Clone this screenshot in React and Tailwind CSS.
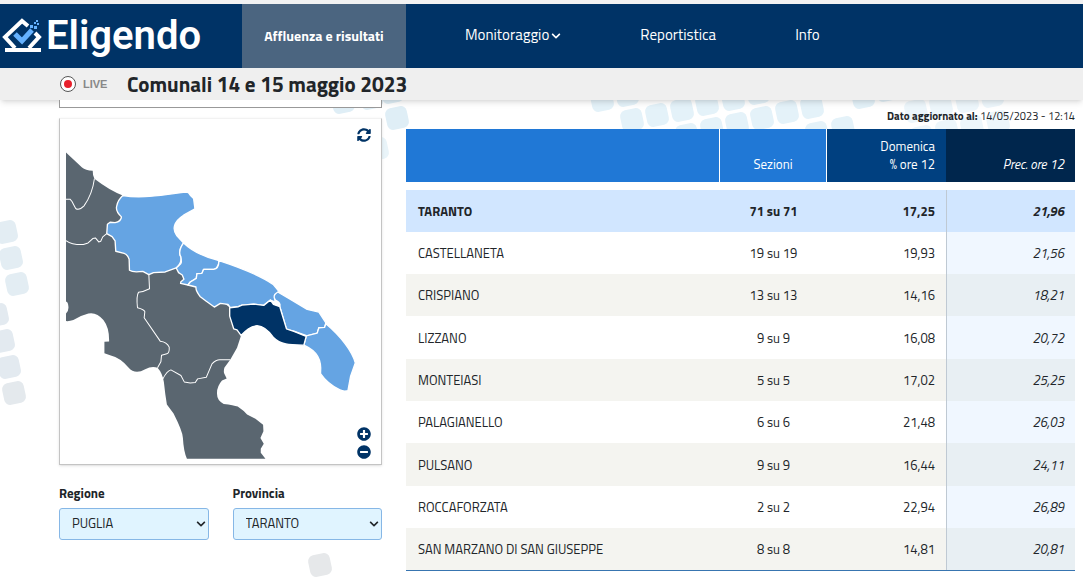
import React, { useState } from 'react';
import { FaSyncAlt, FaPlusCircle, FaMinusCircle, FaChevronDown } from 'react-icons/fa';

const rows = [
  { comune: 'TARANTO', sezioni: '71 su 71', ore12: '17,25', prec: '21,96', total: true },
  { comune: 'CASTELLANETA', sezioni: '19 su 19', ore12: '19,93', prec: '21,56' },
  { comune: 'CRISPIANO', sezioni: '13 su 13', ore12: '14,16', prec: '18,21' },
  { comune: 'LIZZANO', sezioni: '9 su 9', ore12: '16,08', prec: '20,72' },
  { comune: 'MONTEIASI', sezioni: '5 su 5', ore12: '17,02', prec: '25,25' },
  { comune: 'PALAGIANELLO', sezioni: '6 su 6', ore12: '21,48', prec: '26,03' },
  { comune: 'PULSANO', sezioni: '9 su 9', ore12: '16,44', prec: '24,11' },
  { comune: 'ROCCAFORZATA', sezioni: '2 su 2', ore12: '22,94', prec: '26,89' },
  { comune: 'SAN MARZANO DI SAN GIUSEPPE', sezioni: '8 su 8', ore12: '14,81', prec: '20,81' },
];

// centre x, centre y, fill
const tiles = [
  [6, 232, '#e3edf3'], [11, 258, '#e3edf3'], [17, 284, '#e3edf3'],
  [-3, 315, '#e3eaf0'], [3, 341, '#e3eaf0'], [9, 367, '#e3eaf0'], [14, 393, '#e4e9ed'],
  [320, 565, '#e6e8ea'],
  [343, 102, '#dfeef6'], [371, 98, '#dfeef6'], [392, 92, '#dfeef6'], [397, 118, '#dfeef6'], [377, 149, '#e9f4f9'],
  [602, 100, '#e4f2f9'], [627, 95, '#e4f2f9'],
  [632, 120, '#e4f2f9'], [657, 115, '#e4f2f9'], [682, 110, '#e4f2f9'], [707, 104, '#e4f2f9'], [733, 99, '#e4f2f9'], [758, 93, '#e4f2f9'],
  [687, 135, '#e4f2f9'], [712, 129, '#e4f2f9'], [737, 124, '#e4f2f9'], [762, 118, '#e4f2f9'], [787, 112, '#e4f2f9'], [812, 107, '#e4f2f9'],
  [863, 97, '#e4f2f9'], [887, 90, '#e4f2f9'], [817, 133, '#e4f2f9'], [843, 128, '#e4f2f9'],
  [916, 111, '#edf6fb'], [941, 106, '#edf6fb'], [967, 101, '#edf6fb'], [992, 96, '#edf6fb'],
  [922, 137, '#edf6fb'], [947, 131, '#edf6fb'], [972, 127, '#edf6fb'], [998, 122, '#edf6fb'],
];

const Tiles = () => (
  <svg className="pointer-events-none absolute left-0 top-0 -z-10" width="1083" height="581" aria-hidden="true">
    {tiles.map(([x, y, fill]) => (
      <rect key={`${x}-${y}`} x={x - 11} y={y - 11} width="22" height="22" rx="6" fill={fill} transform={`rotate(-12 ${x} ${y})`} />
    ))}
  </svg>
);

const Logo = () => (
  <svg viewBox="0 0 40 36" className="h-9 w-10 shrink-0" aria-hidden="true">
    <path d="M26 8 L20 3 L3 19 L13 30 M27 30 L37 19 L33 15" fill="none" stroke="#fff" strokeWidth="4" />
    <path d="M3 32 H39" stroke="#fff" strokeWidth="4" />
    <path d="M13 16 L20 23 L30 12" fill="none" stroke="#65b2ff" strokeWidth="5" />
    <path d="M28 7h3v3h-3z M32 4h2v2h-2z M32 8h3v3h-3z M35 5h2v2h-2z M34 2h2v2h-2z" fill="#65b2ff" />
  </svg>
);

const PugliaMap = () => (
  <svg viewBox="48 90 925 1002" className="block w-full" role="img" aria-label="Mappa della Puglia">
    <path
      fill="#5a6670"
      d="M48 175 L96 220 Q106 229 128 230 L129 243 L133 254 Q180 290 218 304 L300 400 L400 540 L540 640 L572 723 L560 760 L540 795 L522 820 Q519 832 522 838 L529 852 L515 858 Q500 875 500 895 Q499 918 520 928 Q550 931 562 936 Q580 948 590 960 L615 972 L638 990 L639 1010 L630 1030 L640 1047 L631 1062 L631 1074 L645 1092 L410 1092 Q400 1070 398 1030 Q397 1010 370 957 L350 930 Q345 900 341 862 Q336 835 322 820 Q306 813 285 824 Q255 842 235 819 Q212 790 180 782 L163 776 L163 742 L177 741 Q178 700 160 677 Q140 652 115 657 Q90 663 70 677 Q58 681 48 680 L48 657 Q57 650 55 635 Q54 622 48 621 Z"
    />
    <g fill="none" stroke="#fff" strokeWidth="3" strokeLinejoin="round">
      <path d="M133 254 Q127 300 102 335 Q87 350 77 343 Q70 330 66 322 L60 315 H48" />
      <path d="M48 439 Q65 452 100 451 L114 446 Q122 439 128 433 L136 431 L146 443 L152 441 L158 428 L170 418" />
      <path d="M296 541 L298 583 Q280 592 265 594 Q258 605 262 640 Q282 645 284 652 L282 670 L330 740 Q350 742 357 758 Q358 776 350 778 L334 782 L332 802 L322 820" />
      <path d="M338 853 Q350 829 362 826 L392 843 L402 862 L420 865 L435 864 L442 853 L468 848 Q480 820 485 808 Q498 795 510 796 H540" />
    </g>
    <g fill="#65a4e3" stroke="#fff" strokeWidth="4" strokeLinejoin="round">
      <path d="M218 304 C280 315 340 300 410 294 Q415 294 420 303 L430 313 L434 344 L400 363 C370 382 365 405 380 425 L400 446 C390 460 384 475 392 488 Q395 507 378 521 L345 533 L310 535 L296 541 L278 531 Q248 535 238 528 L237 495 Q232 480 222 477 L197 471 L195 440 L186 427 L170 418 L172 390 L180 384 L195 385 Q213 382 214 368 Q195 350 200 335 Q203 318 218 304 Z" />
      <path d="M400 446 C430 475 470 490 506 499 Q505 524 490 525 L460 525 L455 537 L440 538 L438 552 L420 563 L413 572 L391 567 L392 562 L401 555 L396 542 L385 535 L378 521 C395 507 395 507 392 488 C384 475 390 460 400 446 Z" />
      <path d="M506 499 C570 520 625 541 668 570 L686 592 Q668 606 675 623 L660 617 L640 633 L610 629 L575 632 L564 637 L540 640 L533 630 L510 627 L492 638 L467 620 L450 607 Q436 590 437 578 L413 572 L420 563 L438 552 L440 538 L455 537 L460 525 L490 525 Q505 524 506 499 Z" />
      <path d="M682 593 L720 615 L770 645 L805 653 L826 685 L822 699 L805 700 L800 716 L770 724 L730 710 L708 705 L688 637 Q692 625 675 617 Q664 604 682 593 Z" />
      <path d="M826 688 C870 725 905 770 914 805 L900 845 L892 888 Q880 892 868 886 C840 872 820 852 810 837 C814 795 800 770 760 752 L767 724 L800 716 L805 700 L822 699 Z" />
    </g>
    <path
      fill="#003366"
      stroke="#fff"
      strokeWidth="4"
      strokeLinejoin="round"
      d="M538 640 L564 637 L575 632 L610 629 L640 633 L660 617 L669 630 L688 637 L708 703 L730 711 L767 726 L760 752 C720 751 690 751 670 730 C650 702 635 695 620 694 C600 695 585 710 572 723 L560 706 L550 703 L538 665 Z"
    />
  </svg>
);

const Field = ({ id, label, value }) => {
  const [current, setCurrent] = useState(value);
  return (
    <div className="flex flex-1 flex-col gap-[5px]">
      <label htmlFor={id} className="text-[13px] leading-5 font-bold">{label}</label>
      <div className="relative">
        <select
          id={id}
          value={current}
          onChange={(e) => setCurrent(e.target.value)}
          className="h-8 w-full appearance-none rounded-[3px] border border-[#86b7e6] bg-[#e0f4ff] px-3 text-[13px]"
        >
          <option>{value}</option>
        </select>
        <FaChevronDown size={10} className="pointer-events-none absolute right-[3px] top-[11px]" />
      </div>
    </div>
  );
};

export default function App() {
  return (
    <div className="relative isolate min-h-screen overflow-hidden bg-white font-['Titillium_Web','Noto_Sans',sans-serif] text-[#212529]">
      <Tiles />

      {/* Top bar */}
      <header className="border-t-4 border-[#f2f2f2] bg-[#003366]">
        <div className="flex h-16 items-stretch text-white">
          <a href="#home" className="flex w-[242px] items-center pl-[2px]">
            <Logo />
            <span className="pl-1 font-['Liberation_Sans_Narrow','Roboto',sans-serif] text-[40px] leading-none font-semibold">Eligendo</span>
          </a>
          <nav className="flex items-stretch text-[15px]">
            <a href="#affluenza" className="flex w-[164px] items-center justify-center bg-[#4b6580] pb-px text-sm font-bold">Affluenza e risultati</a>
            <button type="button" className="ml-[59px] flex items-center gap-[2px] pb-px">
              Monitoraggio <FaChevronDown size={10} />
            </button>
            <a href="#reportistica" className="ml-[79px] flex items-center pb-px">Reportistica</a>
            <a href="#info" className="ml-[79px] flex items-center pb-px">Info</a>
          </nav>
        </div>
      </header>

      {/* Election title */}
      <div className="flex h-8 items-center bg-[#efefef] pl-[59px] shadow-md">
        <svg viewBox="0 0 18 18" className="h-[18px] w-[18px]" aria-hidden="true">
          <circle cx="9" cy="9" r="7.5" fill="#fff" stroke="#555" />
          <circle cx="9" cy="9" r="4" fill="#e8202c" />
        </svg>
        <span className="w-[50px] pl-[6px] font-['Liberation_Sans',sans-serif] text-[11px] font-bold text-[#888]">LIVE</span>
        <h1 className="text-[21px] leading-8 font-bold">Comunali 14 e 15 maggio 2023</h1>
      </div>

      <main className="flex gap-6 pr-2 pl-[59px]">
        {/* Map and filters */}
        <section className="w-[323px] shrink-0">
          <div className="h-2 border border-t-0 border-[#999] bg-white" />
          <div className="relative mt-[10px] border border-[#c4c4c4] border-t-[#f2f2f2] bg-white px-[6px] py-[5px] shadow">
            <PugliaMap />
            <button type="button" aria-label="Aggiorna" className="absolute top-[9px] right-[10px] text-[#003366]"><FaSyncAlt size={14} /></button>
            <div className="absolute right-[10px] bottom-[5px] flex flex-col gap-1 text-[#003366]">
              <button type="button" aria-label="Ingrandisci"><FaPlusCircle size={14} /></button>
              <button type="button" aria-label="Riduci"><FaMinusCircle size={14} /></button>
            </div>
          </div>
          <div className="mt-[18px] flex gap-6">
            <Field id="regione" label="Regione" value="PUGLIA" />
            <Field id="provincia" label="Provincia" value="TARANTO" />
          </div>
        </section>

        {/* Turnout table */}
        <section className="min-w-0 flex-1 pt-2">
          <p className="text-right text-[11px] leading-[17px]"><b>Dato aggiornato al:</b> 14/05/2023 - 12:14</p>
          <table className="mt-1 w-full table-fixed border-separate border-spacing-0 border-b border-[#3875b0] text-[13px]">
            <colgroup>
              <col />
              <col className="w-[107px]" />
              <col className="w-[119px]" />
              <col className="w-[129px]" />
            </colgroup>
            <thead>
              <tr className="h-[53px] align-bottom leading-[18px] text-white">
                <th scope="col" aria-label="Comune" className="border-r border-white bg-[#2078d6]" />
                <th scope="col" className="border-r border-white bg-[#2078d6] pb-[9px] font-normal">Sezioni</th>
                <th scope="col" className="bg-[#004080] pr-[11px] pb-[9px] text-right font-normal">Domenica<br />% ore 12</th>
                <th scope="col" className="bg-[#00264d] pr-[11px] pb-[9px] text-right font-normal italic">Prec. ore 12</th>
              </tr>
              <tr className="h-2"><td colSpan={4} className="p-0" /></tr>
            </thead>
            <tbody className="[&_td]:pt-[2px]">
              {rows.map((row, idx) => (
                <tr
                  key={row.comune}
                  className={`${idx > 0 && idx % 3 === 0 ? 'h-[43px]' : 'h-[42px]'} ${row.total ? 'bg-[#d1e6ff] font-bold' : idx % 2 === 0 ? 'bg-[#f4f4f0]' : 'bg-white'}`}
                >
                  <td className="px-3">{row.comune}</td>
                  <td className="text-center">{row.sezioni}</td>
                  <td className="pr-[11px] text-right">{row.ore12}</td>
                  <td className={`border-l border-[#bfc9d3] pr-[11px] text-right italic ${row.total ? '' : idx % 2 === 0 ? 'bg-[#e8eff3]' : 'bg-[#f0f7ff]'}`}>{row.prec}</td>
                </tr>
              ))}
            </tbody>
          </table>
        </section>
      </main>
    </div>
  );
}
